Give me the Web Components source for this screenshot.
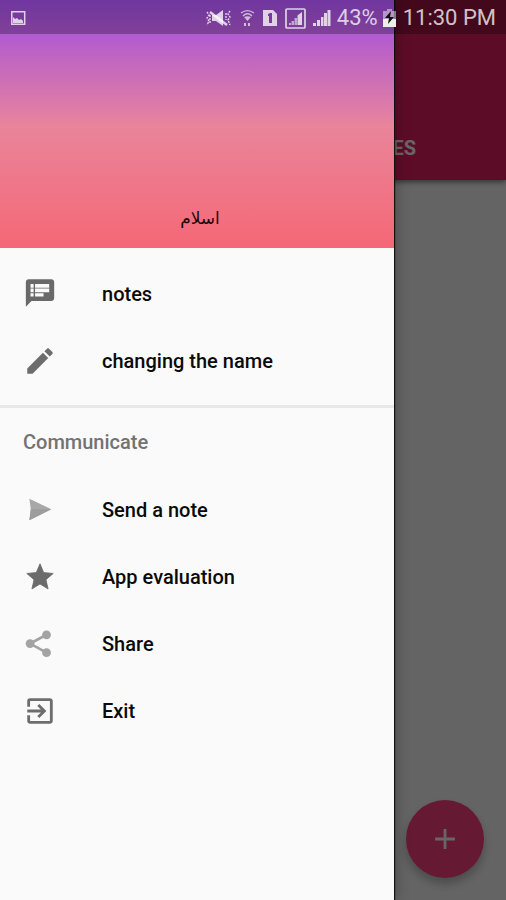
<!DOCTYPE html>
<html lang="en">
<head>
<meta charset="utf-8">
<meta name="viewport" content="width=device-width, initial-scale=1">
<title>Notes</title>
<style>
  body {
    margin: 0;
    font-family: Roboto, "DejaVu Sans", sans-serif;
    font-size: 20px;
  }
</style>
</head>
<body>
<notes-app>
  <status-bar slot="status" battery="43%" time="11:30 PM"></status-bar>
  <app-tabs slot="tabs">ES</app-tabs>
  <fab-button slot="fab" label="Add note"></fab-button>
  <nav-drawer slot="drawer">
    <span slot="name" lang="ar" dir="rtl">اسلام</span>
    <nav-item icon="notes">notes</nav-item>
    <nav-item icon="edit">changing the name</nav-item>
    <nav-group slot="more" heading="Communicate">
      <nav-item icon="send">Send a note</nav-item>
      <nav-item icon="star">App evaluation</nav-item>
      <nav-item icon="share">Share</nav-item>
      <nav-item icon="exit">Exit</nav-item>
    </nav-group>
  </nav-drawer>
</notes-app>

<script>
(function () {
  const ICONS = {
    notes: `<path fill="#696969" d="M20 1.500H4c-1.100 0-2 .9-2 2v17.500l4-4h14c1.100 0 2-.9 2-2V3.500c0-1.100-.9-2-2-2zM7.500 13.800H5.300v-2.400h2.200zm0-3.100H5.300V8.100h2.200zm0-3.200H5.300V4.900h2.200zm7 6.300h-6v-2.400h6zm4-3.100h-10V8.100h10zm0-3.200h-10V4.900h10z"/>`,
    edit: `<path fill="#6d6d6d" d="M3 17.250V21h3.750L17.810 9.940l-3.750-3.750L3 17.250zM20.710 7.040c.39-.39.39-1.020 0-1.410l-2.340-2.340c-.39-.39-1.020-.39-1.410 0l-1.830 1.830 3.750 3.750 1.830-1.830z"/>`,
    send: `<path fill="#a8a8a8" d="M4.500 4 20 11.500 4.500 19.200l1-7.700z"/><path fill="#9d9d9d" d="M5.500 11.500H20L4.500 19.200z"/>`,
    star: `<path fill="#6b6b6b" stroke="#6b6b6b" stroke-width=".6" stroke-linejoin="round" d="M12 16.900 17.700 20.400l-1.500-6.500L21.300 9.500l-6.700-.6L12 2.700 9.400 8.900 2.700 9.500l5.100 4.400L6.300 20.400z"/>`,
    share: `<g fill="#a3a3a3"><path d="M16.600 5.500 5 11.700l11.600 6.400" fill="none" stroke="#a3a3a3" stroke-width="1.900"/><circle cx="16.600" cy="5.500" r="3.100"/><circle cx="5" cy="11.700" r="3.100"/><circle cx="16.600" cy="18.100" r="3.100"/></g>`,
    exit: `<path fill="#6d6d6d" d="M10.090 15.590 11.500 17l5-5-5-5-1.410 1.410L12.670 11H3v2h9.670l-2.580 2.590zM19 3H5a2 2 0 0 0-2 2v4h2V5h14v14H5v-4H3v4c0 1.100.89 2 2 2h14c1.100 0 2-.9 2-2V5c0-1.100-.9-2-2-2z"/>`
  };

  function define(name, html, setup) {
    const template = document.createElement("template");
    template.innerHTML = html;
    customElements.define(name, class extends HTMLElement {
      connectedCallback() {
        if (this.shadowRoot) return;
        const root = this.attachShadow({ mode: "open" });
        root.appendChild(template.content.cloneNode(true));
        if (setup) setup(this, root);
      }
    });
  }

  define("notes-app", `
    <style>
      :host {
        display: block;
        position: relative;
        min-height: 100vh;
        background: #fafafa;
      }
      .scrim {
        position: absolute;
        inset: 0;
        background: rgba(0, 0, 0, .6);
      }
      .fab {
        position: absolute;
        right: 22px;
        bottom: 22px;
      }
      .drawer {
        position: absolute;
        inset: 0 112px 0 0;
        display: grid;
      }
      .status {
        position: absolute;
        inset: 0 0 auto 0;
      }
    </style>
    <slot name="tabs"></slot>
    <div class="fab"><slot name="fab"></slot></div>
    <div class="scrim"></div>
    <div class="drawer"><slot name="drawer"></slot></div>
    <div class="status"><slot name="status"></slot></div>
  `);

  define("app-tabs", `
    <style>
      :host {
        display: flex;
        align-items: flex-end;
        justify-content: flex-end;
        box-sizing: border-box;
        height: 180px;
        padding: 0 90px 20px 0;
        background: #e91e63;
        box-shadow: 0 2px 5px rgba(0, 0, 0, .5);
        color: #fff;
        font-weight: 700;
        line-height: 24px;
      }
    </style>
    <slot></slot>
  `);

  define("fab-button", `
    <style>
      :host { display: block; }
      button {
        display: grid;
        place-items: center;
        width: 78px;
        height: 78px;
        padding: 0;
        border: 0;
        border-radius: 50%;
        background: #ff4081;
        box-shadow: 0 6px 10px rgba(0, 0, 0, .25);
      }
    </style>
    <button type="button">
      <svg width="34" height="34" viewBox="0 0 24 24" fill="#fff" aria-hidden="true"><path d="M19 13h-6v6h-2v-6H5v-2h6V5h2v6h6z"/></svg>
    </button>
  `, (host, root) => {
    root.querySelector("button").setAttribute("aria-label", host.getAttribute("label"));
  });

  define("nav-drawer", `
    <style>
      :host {
        display: block;
        background: #fafafa;
        box-shadow: 1px 0 1px #111, 4px 0 12px rgba(0, 0, 0, .2);
      }
      header {
        display: flex;
        align-items: flex-end;
        justify-content: center;
        box-sizing: border-box;
        height: 248px;
        padding: 0 0 18px 6px;
        background: linear-gradient(#9c4cde 0, #b35bd2 36px, #c468bd 64px, #e07da6 112px, #e9849a 126px, #f56876 248px);
        color: #1c080c;
        font-family: "DejaVu Sans", sans-serif;
        font-size: 17px;
        line-height: 24px;
      }
      nav { padding-top: 12px; }
    </style>
    <header><slot name="name"></slot></header>
    <nav>
      <slot></slot>
      <slot name="more"></slot>
    </nav>
  `);

  define("nav-group", `
    <style>
      :host {
        display: block;
        margin-top: 11px;
        border-top: 3px solid #e8e8e8;
      }
      h2 {
        margin: 0;
        padding: 0 23px;
        color: #737373;
        font-size: 20px;
        font-weight: 500;
        line-height: 68px;
      }
    </style>
    <h2></h2>
    <slot></slot>
  `, (host, root) => {
    root.querySelector("h2").textContent = host.getAttribute("heading");
  });

  define("nav-item", `
    <style>
      :host { display: block; }
      a {
        display: flex;
        align-items: center;
        gap: 45px;
        height: 67px;
        padding: 0 23px;
        color: #0a0a0a;
        font-weight: 500;
        text-decoration: none;
      }
      svg { flex: none; }
    </style>
    <a href="#">
      <svg width="34" height="34" viewBox="0 0 24 24" aria-hidden="true"></svg>
      <span><slot></slot></span>
    </a>
  `, (host, root) => {
    root.querySelector("svg").innerHTML = ICONS[host.getAttribute("icon")];
  });

  define("status-bar", `
    <style>
      :host {
        display: flex;
        align-items: center;
        box-sizing: border-box;
        height: 34px;
        padding: 2px 10px 0;
        background: rgba(0, 0, 0, .28);
        color: rgba(255, 255, 255, .77);
        font-size: 22px;
        line-height: 32px;
      }
      svg { flex: none; fill: currentColor; }
      .icons {
        display: flex;
        align-items: center;
        gap: 7px;
        margin: 0 6px 0 auto;
      }
      .battery { margin: 0 7px 0 5px; }
    </style>
    <svg width="16" height="16" viewBox="0 0 16 16" aria-hidden="true">
      <path fill="none" stroke="currentColor" stroke-width="1.500" d="M1.800 1.800h12.900v12.400H1.800z"/>
      <path d="M3 13V7l2 2 2-1 2 2 2-1 2 2v2z"/>
    </svg>
    <div class="icons">
      <svg width="28" height="18" viewBox="0 0 28 18" aria-hidden="true">
        <path d="M8 6h4l7-5v16l-7-5H8z"/>
        <path fill="none" stroke="currentColor" stroke-width="2.400" d="M6 3l17 13"/>
        <path fill="none" stroke="currentColor" stroke-width="1.400" stroke-dasharray="2 1" d="M3 3l2 3-2 3 2 3-2 4M6 6v8M26 2l-2 3 2 3-2 3 2 5M22 4v7"/>
      </svg>
      <svg width="16" height="18" viewBox="0 0 16 18" aria-hidden="true">
        <g opacity=".85">
          <path fill="none" stroke="currentColor" stroke-width="1.300" d="M2 4c4-3 9-3 13 0M4 7c3-3 6-3 9 0"/>
          <path d="M5 8c2-1 5-1 7 0l-3.500 4zM5 14h2v3H5zM9 14h2v3H9z"/>
        </g>
      </svg>
      <svg width="16" height="18" viewBox="0 0 16 18" aria-hidden="true">
        <path fill-rule="evenodd" d="M1 1h10l4 4v12H1zM6 5v2h1v7h3V4H8z"/>
      </svg>
      <svg width="21" height="21" viewBox="0 0 21 21" aria-hidden="true">
        <rect x="1" y="1" width="19" height="19" rx="1" fill="none" stroke="currentColor" stroke-width="1.700"/>
        <path opacity=".7" d="M4 17v-2h2v2zM6.500 17v-4h2.500v4zM9.500 17v-7H12v7z"/>
        <path d="M12.500 17V7.500L17 4v13z"/>
      </svg>
      <svg width="18" height="18" viewBox="0 0 18 18" aria-hidden="true">
        <path d="M0 17v-3h3v3zM4 17v-6h3v6zM8 17V8h2.500v9zM11 17V4h3v13zM14.500 17V1h3v16z"/>
      </svg>
    </div>
    <span id="battery"></span>
    <svg class="battery" width="13" height="18" viewBox="0 0 13 18" aria-hidden="true">
      <path opacity=".6" d="M4 0h5v2h4v9H0V2h4z"/>
      <path fill="#eee" d="M0 10h13v8H0z"/>
      <path fill="#111" d="M8 2 2 9h4l-1 6 6-7H7z"/>
    </svg>
    <time id="time"></time>
  `, (host, root) => {
    root.getElementById("battery").textContent = host.getAttribute("battery");
    root.getElementById("time").textContent = host.getAttribute("time");
  });
})();
</script>
</body>
</html>
